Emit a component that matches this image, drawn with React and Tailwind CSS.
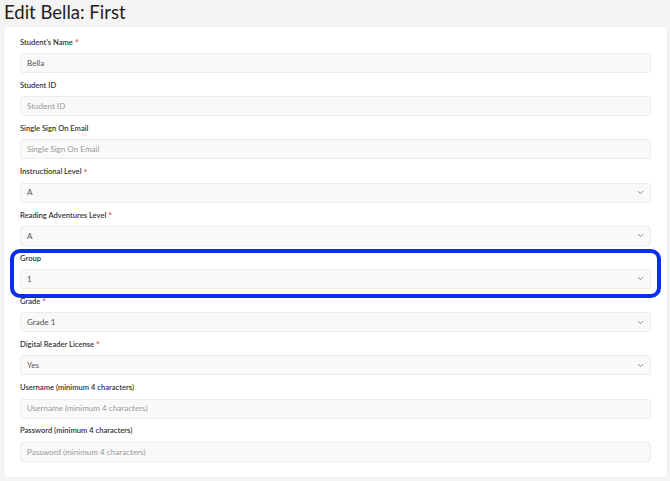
import { ChevronDown } from "lucide-react";

const fields = [
  { label: "Student's Name", required: true, value: "Bella" },
  { label: "Student ID", placeholder: "Student ID" },
  { label: "Single Sign On Email", placeholder: "Single Sign On Email" },
  { label: "Instructional Level", required: true, value: "A", select: true },
  { label: "Reading Adventures Level", required: true, value: "A", select: true },
  { label: "Group", value: "1", select: true, highlight: true },
  { label: "Grade", required: true, value: "Grade 1", select: true },
  { label: "Digital Reader License", required: true, value: "Yes", select: true },
  { label: "Username (minimum 4 characters)", placeholder: "Username (minimum 4 characters)" },
  { label: "Password (minimum 4 characters)", placeholder: "Password (minimum 4 characters)" },
];

function Field({ label, required, value, placeholder, select, highlight }) {
  return (
    <div className="relative">
      {/* annotation ring drawn over the field */}
      {highlight && (
        <div className="pointer-events-none absolute -left-[10px] -right-[10px] -top-[3px] -bottom-[9px] rounded-[10px] border-[4px] border-[#0a2ef0]" />
      )}
      <div className="h-[13px] flex items-center text-[7.6px] font-semibold text-[#333]">
        {label}
        {required && <span className="ml-[2px] text-[9px] leading-none text-[#e5533d]">*</span>}
      </div>
      <div className="mt-[4px] h-[20px] flex items-center justify-between rounded-[3px] border border-[#ececec] bg-[#f9f9f9] pl-[6px] pr-[5px] text-[8.1px]">
        {value ? (
          <span className="text-[#555]">{value}</span>
        ) : (
          <span className="text-[#9a9a9a]">{placeholder}</span>
        )}
        {select && <ChevronDown size={9} strokeWidth={2} className="text-[#666]" />}
      </div>
    </div>
  );
}

export default function App() {
  return (
    <div className="min-h-[481px] bg-[#f4f4f4] font-['Lato','Noto_Sans',sans-serif] pl-[4px] pr-[3px]">
      <h1 className="h-[27px] text-[18.5px] leading-[25px] text-[#222]">Edit Bella: First</h1>
      <div className="rounded-[3px] bg-white shadow-[0_0_2px_rgba(0,0,0,0.08)] pl-[16px] pr-[16px] pt-[9px] pb-[15px] flex flex-col gap-[6.2px]">
        {fields.map((f) => (
          <Field key={f.label} {...f} />
        ))}
      </div>
    </div>
  );
}
